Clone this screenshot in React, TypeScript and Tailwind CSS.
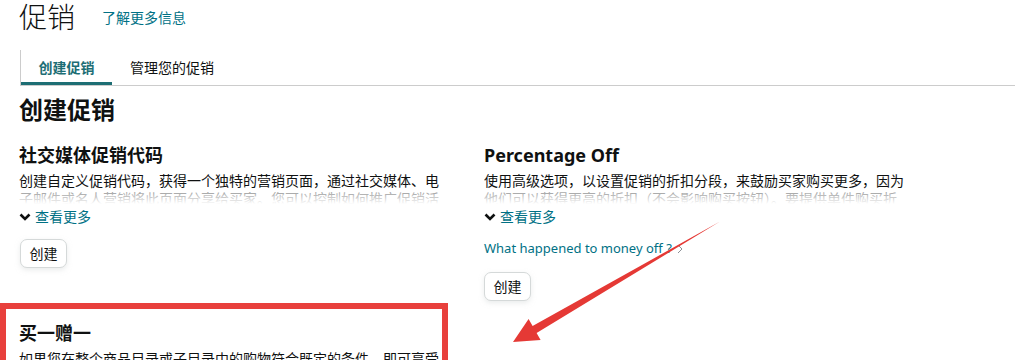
import React from "react";

const font = { fontFamily: '"Noto Sans", "Noto Sans CJK SC", sans-serif' };

const ChevronDown = () => (
  <svg width="12" height="8" viewBox="0 0 12 8" className="mr-[4px]">
    <polyline points="1.5,1.5 6,6 10.5,1.5" fill="none" stroke="#0f1111" strokeWidth="2.6" />
  </svg>
);

const Desc = ({ lines }: { lines: string[] }) => (
  <div className="relative mt-[5px] h-[32px] max-w-[424px] overflow-hidden text-sm leading-[18px] text-[#0f1111]">
    {lines.map((l) => (
      <div key={l} className="whitespace-nowrap">
        {l}
      </div>
    ))}
    <div className="absolute inset-x-0 top-[17px] h-[15px] bg-linear-to-b from-white/50 to-white" />
  </div>
);

const SeeMore = () => (
  <div className="mt-[3px] flex h-[20px] items-center text-sm text-[#007185]">
    <ChevronDown />
    查看更多
  </div>
);

const CreateButton = ({ className = "" }: { className?: string }) => (
  <button
    className={`flex h-[29px] w-[47px] items-center justify-center rounded-[7px] border border-[#d5d9d9] bg-white text-sm text-[#0f1111] shadow-[0_2px_5px_rgba(213,217,217,0.5)] ${className}`}
  >
    创建
  </button>
);

export default function App() {
  return (
    <div className="relative h-[360px] w-[1015px] overflow-hidden bg-white pl-[19px]" style={font}>
      <div className="flex items-center pt-px">
        <h1 className="text-[28px] font-light leading-[32px] text-[#0f1111]">促销</h1>
        <a className="ml-[27px] mt-[2px] text-sm text-[#007185]">了解更多信息</a>
      </div>

      <div className="ml-px mt-[17px] flex h-[36px] border-b border-l border-[#cccccc]">
        <div className="flex w-[91px] items-center justify-center border-b-[3px] border-[#1d6e74] pt-[3px] text-sm font-bold text-[#1d6e74]">
          创建促销
        </div>
        <div className="flex items-center pl-[18px] text-sm text-[#0f1111]">管理您的促销</div>
      </div>

      <h2 className="mt-[9px] text-2xl font-bold leading-[30px] text-[#0f1111]">创建促销</h2>

      <div className="mt-[18px] grid grid-cols-[465px_1fr]">
        <div>
          <h3 className="text-lg font-bold leading-[24px] text-[#0f1111]">社交媒体促销代码</h3>
          <Desc
            lines={[
              "创建自定义促销代码，获得一个独特的营销页面，通过社交媒体、电",
              "子邮件或名人营销将此页面分享给买家。您可以控制如何推广促销活",
            ]}
          />
          <SeeMore />
          <CreateButton className="mt-[12px] ml-px" />
        </div>
        <div>
          <h3 className="text-lg font-bold leading-[24px] text-[#0f1111]">Percentage Off</h3>
          <Desc
            lines={[
              "使用高级选项，以设置促销的折扣分段，来鼓励买家购买更多，因为",
              "他们可以获得更高的折扣（不会影响购买按钮）。要提供单件购买折",
            ]}
          />
          <SeeMore />
          <div className="mt-[12px] flex h-[20px] items-center text-[13px] text-[#007185]">
            What happened to money off ?
            <svg width="8" height="10" viewBox="0 0 8 10" className="ml-[4px]">
              <polyline points="2,1 6,5 2,9" fill="none" stroke="#8d9096" strokeWidth="1" />
            </svg>
          </div>
          <CreateButton className="mt-[13px]" />
        </div>
        <div className="pt-[20px]">
          <h3 className="text-lg font-bold leading-[24px] text-[#0f1111]">买一赠一</h3>
          <div className="mt-[5px] whitespace-nowrap text-sm leading-[18px] text-[#0f1111]">
            如果您在整个商品目录或子目录中的购物符合既定的条件，即可享受
          </div>
        </div>
      </div>

      <div className="pointer-events-none absolute left-0 top-[303px] h-[80px] w-[448px] border-[6px] border-[#e8403c]" />

      <svg className="pointer-events-none absolute left-0 top-0" width="1015" height="360">
        <polygon
          points="720,221.5 536.6,333 540.6,340 513,342 528.6,319.1 532.6,326"
          fill="#e53935"
        />
      </svg>
    </div>
  );
}
